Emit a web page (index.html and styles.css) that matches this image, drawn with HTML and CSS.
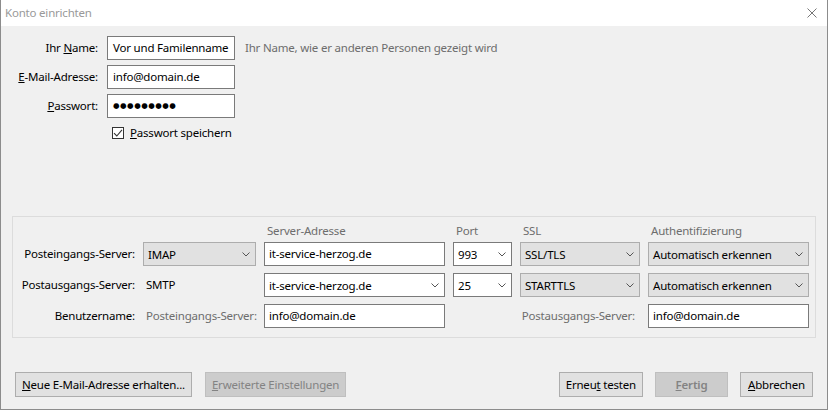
FILE: index.html
```html
<!DOCTYPE html>
<html lang="de">
<head>
<meta charset="utf-8">
<title>Konto einrichten</title>
<link rel="stylesheet" href="styles.css">
</head>
<body>
<div class="window">
  <div class="titlebar">
    <span class="title">Konto einrichten</span>
    <svg class="close" width="10" height="10" viewBox="0 0 10 10"><path d="M0.5 0.5L9.5 9.5M9.5 0.5L0.5 9.5" stroke="#777" stroke-width="1" fill="none"/></svg>
  </div>
  <div class="content">
    <div class="identity">
      <span class="lbl">Ihr <u>N</u>ame:</span>
      <div class="field">Vor und Familenname</div>
      <span class="hint">Ihr Name, wie er anderen Personen gezeigt wird</span>

      <span class="lbl"><u>E</u>-Mail-Adresse:</span>
      <div class="field">info@domain.de</div>
      <span></span>

      <span class="lbl"><u>P</u>asswort:</span>
      <div class="field pw">●●●●●●●●●</div>
      <span></span>

      <div class="check-row">
        <span class="checkbox"><svg width="10" height="10" viewBox="0 0 10 10"><path d="M1 5.2L3.8 8L9 1.8" stroke="#333" stroke-width="1.1" fill="none"/></svg></span>
        <span><u>P</u>asswort speichern</span>
      </div>
    </div>

    <div class="server-box">
      <span></span><span></span>
      <span class="head pad">Server-Adresse</span>
      <span class="head pad">Port</span>
      <span class="head pad">SSL</span>
      <span class="head pad">Authentifizierung</span>

      <span class="lbl">Posteingangs-Server:</span>
      <div class="select"><span>IMAP</span><svg class="chev" width="8" height="5" viewBox="0 0 8 5"><path d="M0.5 0.5L4 4L7.5 0.5" stroke="#555" fill="none"/></svg></div>
      <div class="field">it-service-herzog.de</div>
      <div class="combo"><span>993</span><svg class="chev" width="8" height="5" viewBox="0 0 8 5"><path d="M0.5 0.5L4 4L7.5 0.5" stroke="#555" fill="none"/></svg></div>
      <div class="select"><span>SSL/TLS</span><svg class="chev" width="8" height="5" viewBox="0 0 8 5"><path d="M0.5 0.5L4 4L7.5 0.5" stroke="#555" fill="none"/></svg></div>
      <div class="select"><span>Automatisch erkennen</span><svg class="chev" width="8" height="5" viewBox="0 0 8 5"><path d="M0.5 0.5L4 4L7.5 0.5" stroke="#555" fill="none"/></svg></div>

      <span class="lbl">Postausgangs-Server:</span>
      <span class="plain pad">SMTP</span>
      <div class="combo"><span>it-service-herzog.de</span><svg class="chev" width="8" height="5" viewBox="0 0 8 5"><path d="M0.5 0.5L4 4L7.5 0.5" stroke="#555" fill="none"/></svg></div>
      <div class="combo"><span>25</span><svg class="chev" width="8" height="5" viewBox="0 0 8 5"><path d="M0.5 0.5L4 4L7.5 0.5" stroke="#555" fill="none"/></svg></div>
      <div class="select"><span>STARTTLS</span><svg class="chev" width="8" height="5" viewBox="0 0 8 5"><path d="M0.5 0.5L4 4L7.5 0.5" stroke="#555" fill="none"/></svg></div>
      <div class="select"><span>Automatisch erkennen</span><svg class="chev" width="8" height="5" viewBox="0 0 8 5"><path d="M0.5 0.5L4 4L7.5 0.5" stroke="#555" fill="none"/></svg></div>

      <span class="lbl">Benutzername:</span>
      <span class="plain pad muted">Posteingangs-Server:</span>
      <div class="field">info@domain.de</div>
      <span class="plain muted out-label">Postausgangs-Server:</span>
      <div class="field">info@domain.de</div>
    </div>

    <div class="actions">
      <div class="group">
        <button class="btn wide"><u>N</u>eue E-Mail-Adresse erhalten...</button>
        <button class="btn disabled"><u>E</u>rweiterte Einstellungen</button>
      </div>
      <div class="group">
        <button class="btn">Erneu<u>t</u> testen</button>
        <button class="btn disabled default"><u>F</u>ertig</button>
        <button class="btn"><u>A</u>bbrechen</button>
      </div>
    </div>
  </div>
</div>
</body>
</html>
```

FILE: styles.css
```css
html, body {
  margin: 0;
  padding: 0;
  background: #ffffff;
}

body {
  font-family: "Noto Sans", "DejaVu Sans", sans-serif;
  font-size: 11.5px;
  letter-spacing: -0.2px;
  color: #000;
}

.window {
  width: 828px;
  height: 410px;
  box-sizing: border-box;
  border: 1px solid #8c8c8c;
  border-top: 0;
  background: #f0f0f0;
  display: flex;
  flex-direction: column;
}

.titlebar {
  height: 26px;
  flex: 0 0 26px;
  background: #ffffff;
  display: flex;
  align-items: center;
  justify-content: space-between;
  padding: 0 10px 0 4px;
}

.title {
  color: #999999;
  line-height: 16px;
}

.close {
  display: block;
}

.content {
  flex: 1;
  display: flex;
  flex-direction: column;
  padding: 10px 11px 0;
}

/* identity form */
.identity {
  display: grid;
  grid-template-columns: 86px 128px 1fr;
  grid-template-rows: 24px 24px 24px 16px;
  column-gap: 9px;
  row-gap: 5px;
}

.lbl {
  text-align: right;
  align-self: center;
  line-height: 16px;
  white-space: nowrap;
}

.hint {
  align-self: center;
  line-height: 16px;
  color: #6d6d6d;
  padding-left: 1px;
  white-space: nowrap;
}

.field {
  box-sizing: border-box;
  height: 24px;
  background: #ffffff;
  border: 1px solid #7a7a7a;
  padding: 0 5px;
  line-height: 22px;
  white-space: nowrap;
  overflow: hidden;
}

.pw {
  font-family: "DejaVu Sans", sans-serif;
  font-size: 7.5px;
  letter-spacing: 0.5px;
  line-height: 22px;
}

.check-row {
  grid-column: 2 / 4;
  height: 16px;
  margin-top: 2px;
  display: flex;
  align-items: center;
  gap: 6px;
  padding-left: 5px;
  line-height: 16px;
}

.checkbox {
  box-sizing: border-box;
  width: 12px;
  height: 12px;
  border: 1px solid #333333;
  background: #ffffff;
  display: flex;
  align-items: center;
  justify-content: center;
}

.checkbox svg {
  display: block;
}

/* server box */
.server-box {
  margin-top: 77px;
  display: grid;
  grid-template-columns: 121px 113px 181px 59px 120px 161px;
  grid-template-rows: 12px 24px 24px 24px;
  column-gap: 8px;
  row-gap: 7px;
  padding: 6px 6px 9px 1px;
  border: 1px solid #dcdcdc;
}

.head {
  color: #6d6d6d;
  line-height: 16px;
  white-space: nowrap;
}

.pad {
  padding-left: 3px;
}

.plain {
  align-self: center;
  line-height: 16px;
  white-space: nowrap;
}

.muted {
  color: #6d6d6d;
}

.out-label {
  grid-column: 4 / 6;
  justify-self: end;
  padding-right: 5px;
}

.select,
.combo {
  box-sizing: border-box;
  height: 24px;
  display: flex;
  align-items: center;
  justify-content: space-between;
  padding: 0 5px 0 4px;
  white-space: nowrap;
  overflow: hidden;
}

.select {
  background: #e1e1e1;
  border: 1px solid #adadad;
}

.combo {
  background: #ffffff;
  border: 1px solid #7a7a7a;
}

.chev {
  display: block;
  flex: 0 0 auto;
}

.server-box .field {
  padding: 0 4px;
}

/* actions */
.actions {
  margin-top: 34px;
  display: flex;
  justify-content: space-between;
  padding: 0 3px;
}

.group {
  display: flex;
  gap: 12px;
}

.group:first-child {
  gap: 13px;
}

.btn {
  box-sizing: border-box;
  height: 25px;
  min-width: 73px;
  padding: 0 6px;
  border: 1px solid #adadad;
  background: #e1e1e1;
  font-family: inherit;
  font-size: 11.5px;
  letter-spacing: -0.2px;
  color: #000;
  line-height: 16px;
  white-space: nowrap;
}

.btn.disabled {
  background: #cccccc;
  border-color: #bfbfbf;
  color: #838383;
}

.btn.default {
  font-weight: 600;
}
```
